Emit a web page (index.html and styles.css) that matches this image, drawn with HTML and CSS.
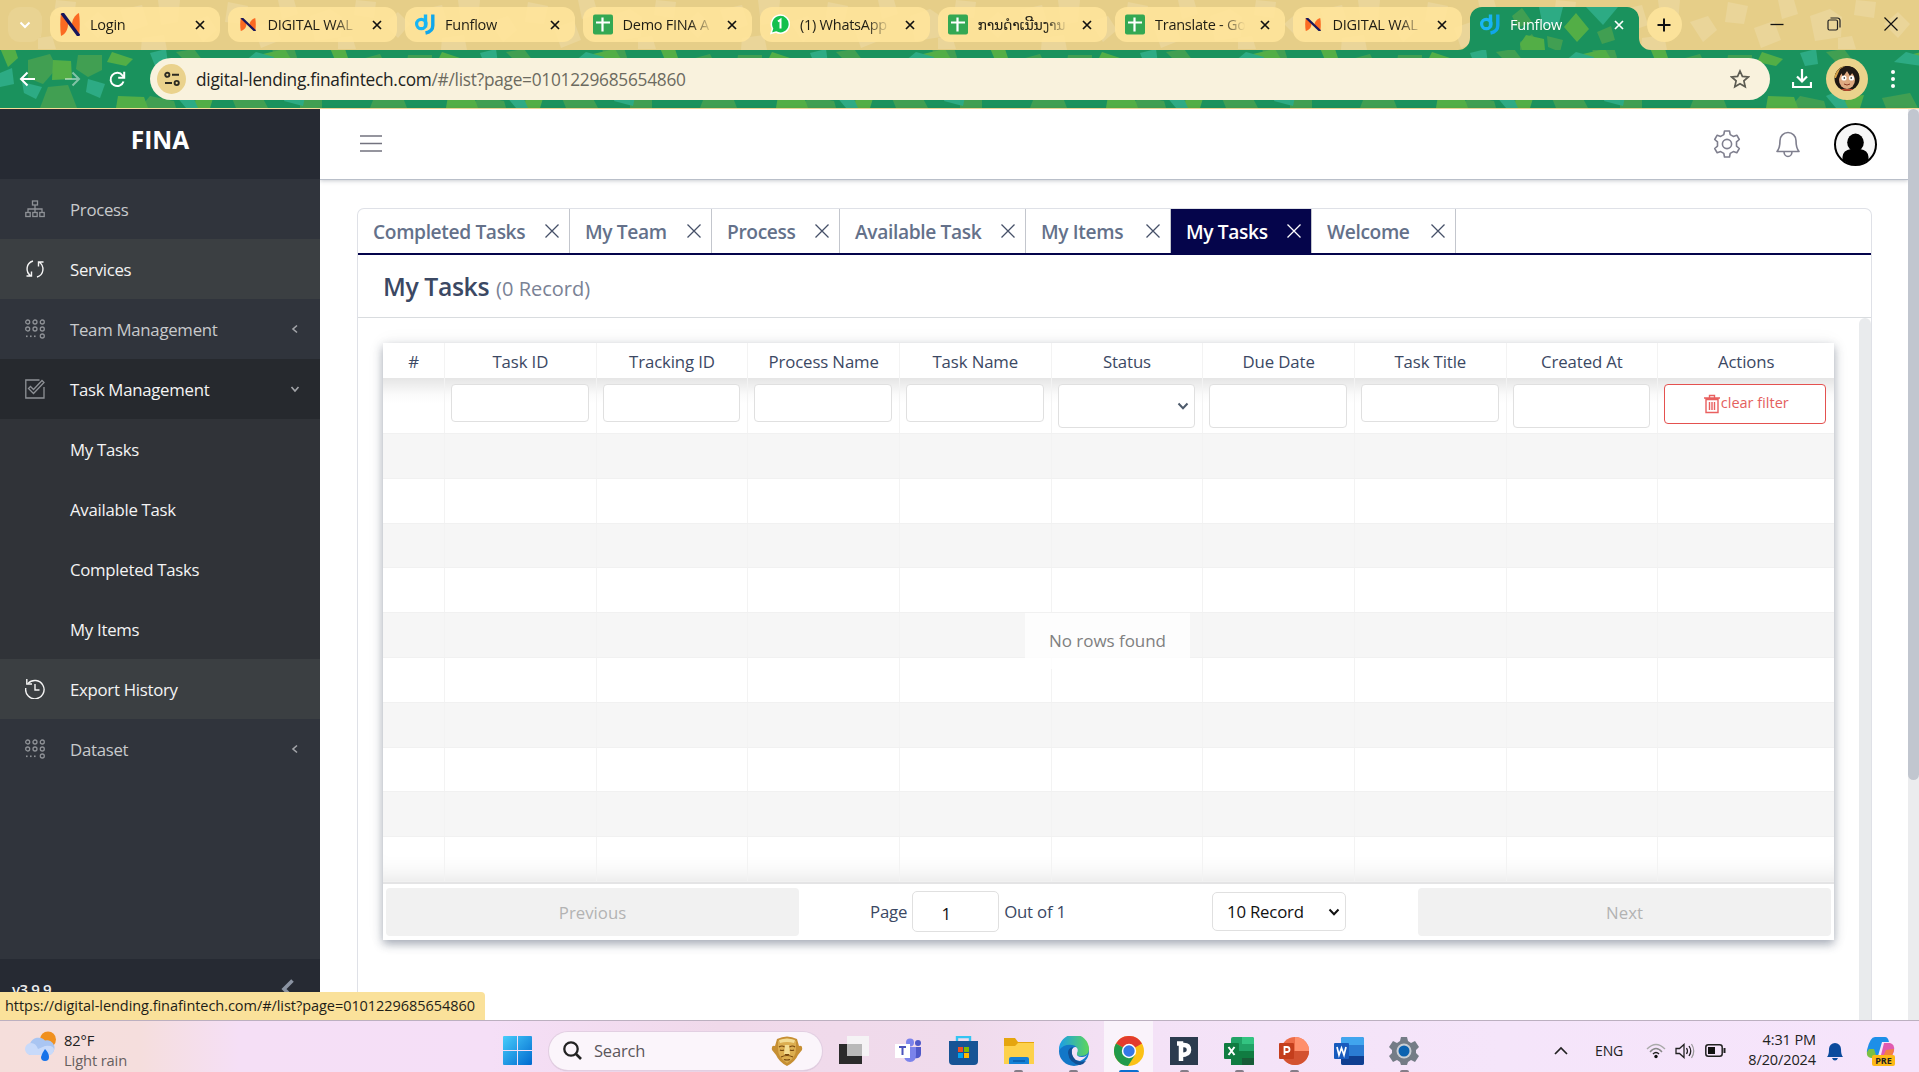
FILE: index.html
```html
<!DOCTYPE html>
<html lang="en">
<head>
<meta charset="utf-8">
<title>Funflow</title>
<link rel="stylesheet" href="styles.css">
</head>
<body>
<svg class="defs" width="0" height="0" aria-hidden="true">
  <defs>
    <symbol id="nlogo" viewBox="0 0 20 24" preserveAspectRatio="none"><path d="M1 0C0 7 0 17 1 24C6 22 8 16 8 12C8 8 5 3 1 0Z" fill="#fb6a22"/><path d="M19 0C20 7 20 17 19 24C15 21 12 16 12 12C12 7 15 2 19 0Z" fill="#fb6a22"/><path d="M2 0L19 24" stroke="#17165c" stroke-width="3.4"/></symbol>
    <symbol id="dj" viewBox="0 0 20 20"><path d="M10.5 0v13" stroke="#19b5f3" stroke-width="3.4" fill="none"/><circle cx="6.3" cy="9.5" r="4.7" stroke="#19b5f3" stroke-width="3.2" fill="none"/><path d="M17.8 0v11c0 4-2.5 6.500-7.300 7.500" stroke="#10a6ea" stroke-width="3.4" fill="none"/></symbol>
    <symbol id="sheet" viewBox="0 0 20 20"><rect width="20" height="20" rx="2" fill="#34a853"/><path d="M9.500 3v14M3 8h14" stroke="#fff" stroke-width="2.2"/></symbol>
    <symbol id="x" viewBox="0 0 10 10"><path d="M1 1l8 8M9 1l-8 8" stroke="currentColor" stroke-width="1.7"/></symbol>
    <symbol id="thinx" viewBox="0 0 14 14"><path d="M.5 .5l13 13M13.500 .5l-13 13" stroke="currentColor" stroke-width="1.3"/></symbol>
    <symbol id="dots" viewBox="0 0 20 20"><g fill="none" stroke="currentColor" stroke-width="1.300"><circle cx="2.700" cy="3" r="2"/><circle cx="10" cy="3" r="2"/><circle cx="17.300" cy="3" r="2"/><circle cx="2.700" cy="10" r="2"/><circle cx="10" cy="10" r="2"/><circle cx="17.300" cy="10" r="2"/><circle cx="17.300" cy="17" r="2"/></g><g fill="currentColor"><rect x="1" y="16.500" width="1.600" height="1.600"/><rect x="5" y="16.500" width="1.600" height="1.600"/><rect x="9" y="16.500" width="1.600" height="1.600"/></g></symbol>
    <pattern id="confetti" width="330" height="108" patternUnits="userSpaceOnUse">
      <g fill="#419f52"><path d="M28 60l22-6 7 14-14 16-15-6z"/><path d="M78 55l24 0 0 15-14 7-12-8z"/><path d="M48 87l20-2 9 23H40z"/><path d="M125 0l20 4 4 22-18 5-14-17z"/><path d="M190 8l22-4 5 20-18 6z"/><path d="M176 52l18-3 9 12-12 6z"/><path d="M150 96l24 5 2 7h-36z"/><path d="M232 98l28-5 8 15h-32z"/><path d="M272 45l20-4 6 20-24 4z"/><path d="M300 84l22 2 0 22h-22z"/><path d="M4 8l18 4-2 18-20-4z"/></g>
      <g fill="#53ae46"><path d="M53 60l18 1 1 18-20 1z"/><path d="M0 48l14-2 4 12-10 9z"/><path d="M112 52l21 7-7 7-19-4z"/><path d="M118 96l26 1 4 11h-32z"/><path d="M229 20l18-2 9 16-16 14-13-10z"/><path d="M263 54l22-5 7 12-20 4z"/><path d="M310 18l12-8 8 18-17 9z"/><path d="M196 97l18-2-4 13h-16z"/></g>
      <g fill="#2dab84"><path d="M0 73l12-5 2 16-14 3z"/><path d="M22 82l20 5-6 12-12-6z"/><path d="M88 79l17 5-5 14-14-6z"/><path d="M82 4l15 0-2 17-17-2z"/><path d="M150 53l16-4 2 15-13 2z"/><path d="M176 96l14-6 8 18h-12z"/><path d="M244 62l12-10 18 5-2 9z"/><path d="M270 2l17 8-4 17-20-4z"/><path d="M288 88l18 4-3 14-19-5z"/></g>
    </pattern>
    <pattern id="paper" width="300" height="50" patternUnits="userSpaceOnUse">
      <g fill="#fff" opacity=".14"><path d="M10 16l20-7 12 8-1 20-26 4z"/><path d="M56 0l20 2-2 16-20-3z"/><path d="M84 24l14-12 12 12-12 14z"/><path d="M120 10l22-5 6 20-20 7z"/><path d="M158 0l22 0-2 22-17 3z"/><path d="M190 22l18-6 9 14-14 12z"/><path d="M228 2l20 4-4 18-19-2z"/><path d="M254 28l20-7 7 19-20 8z"/><path d="M278 0h16l4 14-16 5z"/><path d="M38 38l14-2 4 13h-18z"/><path d="M142 38l22-3 3 15h-26z"/></g>
    </pattern>
    <clipPath id="strip"><path d="M0 0H1919V50H1651a12 12 0 0 1-12-12V19a12 12 0 0 0-12-12H1482a12 12 0 0 0-12 12V38a12 12 0 0 1-12 12H0z"/></clipPath>
    <clipPath id="activetab"><path d="M1470 50V19a12 12 0 0 1 12-12H1627a12 12 0 0 1 12 12V50z"/></clipPath>
  </defs>
</svg>

<header class="browser">
  <svg class="theme" width="1919" height="109"><rect width="1919" height="109" fill="#1a925d"/><rect width="1919" height="109" fill="url(#confetti)"/>
    <g clip-path="url(#activetab)"><rect x="1470" width="170" height="50" fill="#1a925d"/><path d="M1512 16l10-8 10 14-14 6zM1520 42l12-8 10 16h-22zM1547 36l16 4-3 12-12-5z" fill="#419f52"/><path d="M1539 7h24l-4 16-16 4z" fill="#2dab84"/><path d="M1564 27l12-14 13 16-12 13zM1520 44l6-9 18 4 1 11h-23z" fill="#53ae46"/><path d="M1597 32l14-6 4 14-13 4z" fill="#419f52"/><path d="M1586 7h32l-15 18z" fill="#2dab84"/></g>
    <g clip-path="url(#strip)"><rect width="1919" height="50" fill="#e6ce88"/><rect width="1919" height="50" fill="url(#paper)"/></g></svg>
  <div class="tabstrip">
    <div class="tabsearch"><svg width="12" height="8" viewBox="0 0 12 8"><path d="M1.500 1.500L6 6l4.500-4.500" fill="none" stroke="#fff" stroke-width="2"/></svg></div>
    <div class="tab"><svg class="fav"><use href="#nlogo"/></svg><span>Login</span><svg class="close"><use href="#x"/></svg></div>
    <div class="tab small"><svg class="fav"><use href="#nlogo"/></svg><span>DIGITAL WAL</span><svg class="close"><use href="#x"/></svg></div>
    <div class="tab"><svg class="fav"><use href="#dj"/></svg><span>Funflow</span><svg class="close"><use href="#x"/></svg></div>
    <div class="tab"><svg class="fav"><use href="#sheet"/></svg><span>Demo FINA A</span><svg class="close"><use href="#x"/></svg></div>
    <div class="tab"><svg class="fav" viewBox="0 0 20 20"><path d="M1 19l1.500-5A9 9 0 1 1 6 17.500z" fill="#14c04d" stroke="#fff" stroke-width="1.500"/><path d="M8 7l2.500-1.800V14" stroke="#fff" stroke-width="2" fill="none"/></svg><span>(1) WhatsApp</span><svg class="close"><use href="#x"/></svg></div>
    <div class="tab"><svg class="fav"><use href="#sheet"/></svg><span class="lao">ການດຳເນີນງານ</span><svg class="close"><use href="#x"/></svg></div>
    <div class="tab"><svg class="fav"><use href="#sheet"/></svg><span>Translate - Go</span><svg class="close"><use href="#x"/></svg></div>
    <div class="tab small"><svg class="fav"><use href="#nlogo"/></svg><span>DIGITAL WAL</span><svg class="close"><use href="#x"/></svg></div>
    <div class="tab active"><svg class="fav"><use href="#dj"/></svg><span>Funflow</span><svg class="close"><use href="#x"/></svg></div>
    <div class="newtab"><svg width="14" height="14" viewBox="0 0 14 14"><path d="M7 .5v13M.5 7h13" stroke="#111" stroke-width="2"/></svg></div>
    <div class="winctl">
      <svg width="14" height="14" viewBox="0 0 14 14"><path d="M.5 7.500h13" stroke="#111" stroke-width="1.300"/></svg>
      <svg width="14" height="14" viewBox="0 0 14 14"><rect x="1" y="3" width="9.500" height="10" rx="1.500" fill="none" stroke="#222" stroke-width="1.200"/><path d="M3.500 1h7a2.500 2.500 0 0 1 2.500 2.500v7" fill="none" stroke="#222" stroke-width="1.200"/></svg>
      <svg width="14" height="14" viewBox="0 0 14 14"><path d="M.5 .5l13 13M13.500 .5l-13 13" stroke="#111" stroke-width="1.200"/></svg>
    </div>
  </div>
  <div class="toolbar">
    <svg class="back" width="18" height="16" viewBox="0 0 18 16"><path d="M16 8H2M8.500 1.500L2 8l6.500 6.500" fill="none" stroke="#fff" stroke-width="2"/></svg>
    <svg class="fwd" width="18" height="16" viewBox="0 0 18 16"><path d="M1 8h14M8.500 1.500L15 8l-6.500 6.500" fill="none" stroke="#fff" stroke-width="2" opacity=".45"/></svg>
    <svg class="reload" width="17" height="17" viewBox="0 0 17 17"><path d="M14.500 10.500A6.600 6.600 0 1 1 13.500 4.500L15 6" fill="none" stroke="#fff" stroke-width="2"/><path d="M15.200 .8v6h-6" fill="none" stroke="#fff" stroke-width="2"/></svg>
    <div class="omnibox">
      <span class="site"><svg width="16" height="16" viewBox="0 0 16 16"><g fill="none" stroke="#2c2b22" stroke-width="1.900"><circle cx="3.300" cy="3.800" r="2.100"/><path d="M8 3.800h7M1 12h7"/><circle cx="12.700" cy="12" r="2.100"/></g></svg></span>
      <span class="url">digital-lending.finafintech.com<span>/#/list?page=0101229685654860</span></span>
      <svg class="star" width="20" height="20" viewBox="0 0 20 20"><path d="M10 2l2.400 5.400 5.900.6-4.400 3.900 1.300 5.800L10 14.700l-5.200 3 1.300-5.800L1.700 8l5.900-.6z" fill="none" stroke="#5d5c52" stroke-width="1.700"/></svg>
    </div>
    <svg class="download" width="20" height="20" viewBox="0 0 20 20"><path d="M10 0v12M5 7.500l5 5 5-5M1 13v5h18v-5" fill="none" stroke="#fff" stroke-width="2.200"/></svg>
    <svg class="profile" width="42" height="42" viewBox="0 0 42 42"><circle cx="21" cy="21" r="21" fill="#ebd38c"/><clipPath id="pc"><circle cx="21" cy="20.500" r="12.500"/></clipPath><g clip-path="url(#pc)"><rect width="42" height="42" fill="#1d1712"/><ellipse cx="21" cy="22" rx="8" ry="9" fill="#dfa981"/><path d="M8 12Q20 4 34 12L30 24 27 14 24 18 21 13 17 19 15 14 12 24z" fill="#221a15"/><path d="M6 20Q8 7 21 7L14 11 10 20z" fill="#d7a449"/><circle cx="18" cy="20" r="2.600" fill="#fff"/><circle cx="25.500" cy="20" r="2.600" fill="#fff"/><circle cx="18.300" cy="20" r=".8"/><circle cx="25.200" cy="20" r=".8"/><path d="M18 26q3 2 6 0" stroke="#8b3c28" fill="none"/><path d="M14 31h14v4H14z" fill="#b5462d"/></g></svg>
    <svg class="menu" width="6" height="20" viewBox="0 0 6 20"><g fill="#fff"><circle cx="3" cy="3" r="2"/><circle cx="3" cy="10" r="2"/><circle cx="3" cy="17" r="2"/></g></svg>
  </div>
</header>

<div class="page">
  <aside class="sidebar">
    <div class="brand">FINA</div>
    <nav>
      <a class="item"><svg viewBox="0 0 20 20"><g fill="none" stroke="currentColor" stroke-width="1.300"><rect x="7.500" y="2" width="5" height="4"/><rect x=".8" y="13.500" width="4.400" height="4"/><rect x="7.800" y="13.500" width="4.400" height="4"/><rect x="14.800" y="13.500" width="4.400" height="4"/><path d="M10 6v7.500M3 13.500V10h14v3.500"/></g></svg>Process</a>
      <a class="item hl"><svg viewBox="0 0 20 20"><g fill="none" stroke="currentColor" stroke-width="1.400"><path d="M8 2C1 4 0 13 6 17M1.500 17H6.500V12.500M12 18c7-2 8-11 2-15M18.500 3h-5V7.500"/></g></svg>Services</a>
      <a class="item"><svg viewBox="0 0 20 20"><use href="#dots"/></svg>Team Management<svg class="arr" viewBox="0 0 8 10"><path d="M6 1.500L2 5l4 3.500" fill="none" stroke="currentColor" stroke-width="1.600"/></svg></a>
      <a class="item open"><svg viewBox="0 0 20 20"><g fill="none" stroke="currentColor" stroke-width="1.300"><path d="M14.500 1H.8v18H19V8"/><path d="M3.500 9.500l2-2 3 3 8.500-9 2 2-10.500 11z"/></g></svg>Task Management<svg class="arr" viewBox="0 0 10 8"><path d="M1.500 2L5 6l3.500-4" fill="none" stroke="currentColor" stroke-width="1.600"/></svg></a>
      <a class="item sub">My Tasks</a>
      <a class="item sub">Available Task</a>
      <a class="item sub">Completed Tasks</a>
      <a class="item sub">My Items</a>
      <a class="item hl"><svg viewBox="0 0 20 20"><g fill="none" stroke="currentColor" stroke-width="1.400"><path d="M3 4.500A9.200 9.200 0 1 1 .8 9"/><path d="M1.800 0v5H7M10 5v6h4.500"/></g></svg>Export History</a>
      <a class="item"><svg viewBox="0 0 20 20"><use href="#dots"/></svg>Dataset<svg class="arr" viewBox="0 0 8 10"><path d="M6 1.500L2 5l4 3.500" fill="none" stroke="currentColor" stroke-width="1.600"/></svg></a>
    </nav>
    <div class="version"><span>v3.9.9</span><svg width="14" height="20" viewBox="0 0 14 20"><path d="M11.500 1.500L3 10l8.500 8.500" fill="none" stroke="#8a93a2" stroke-width="3.600"/></svg></div>
  </aside>
  <div class="main">
    <div class="topbar">
      <svg class="burger" width="22" height="17" viewBox="0 0 22 17"><path d="M0 1h22M0 8.500h22M0 16h22" stroke="#73737f" stroke-width="1.500"/></svg>
      <svg class="gear" width="28" height="28" viewBox="0 0 28 28"><g fill="none" stroke="#7f7f8e" stroke-width="1.600" stroke-linejoin="round"><circle cx="14" cy="14" r="4.600"/><path d="M11.500 1h5l.7 3.600 3.100 1.800 3.500-1.200 2.500 4.300-2.800 2.400v4.200l2.800 2.400-2.500 4.300-3.500-1.200-3.100 1.800-.7 3.600h-5l-.7-3.600-3.100-1.800-3.500 1.200-2.500-4.300 2.800-2.400v-4.200L1.700 9.500l2.500-4.300 3.500 1.200 3.100-1.800z"/></g></svg>
      <svg class="bell" width="24" height="27" viewBox="0 0 24 27"><path d="M1 20.500C4 17 4 13 4 9.500a8 8 0 0 1 16 0c0 3.500 0 7.500 3 11zM8 20.500a4 5 0 0 0 8 0" fill="none" stroke="#7f7f8e" stroke-width="1.600" stroke-linejoin="round"/></svg>
      <svg class="avatar" width="43" height="43" viewBox="0 0 43 43"><clipPath id="av"><circle cx="21.500" cy="21.500" r="20"/></clipPath><circle cx="21.500" cy="21.500" r="20.500" fill="#f6f6f6" stroke="#000" stroke-width="2"/><g clip-path="url(#av)"><ellipse cx="21.500" cy="19.500" rx="8.300" ry="9"/><path d="M8.500 42V34Q9 27 17 26h9q8 1 8.500 8v8z"/></g></svg>
    </div>
    <div class="content">
      <section class="card">
        <div class="pagetabs">
          <div class="ptab w1"><span>Completed Tasks</span><svg><use href="#thinx"/></svg></div>
          <div class="ptab w2"><span>My Team</span><svg><use href="#thinx"/></svg></div>
          <div class="ptab w3"><span>Process</span><svg><use href="#thinx"/></svg></div>
          <div class="ptab w4"><span>Available Task</span><svg><use href="#thinx"/></svg></div>
          <div class="ptab w5"><span>My Items</span><svg><use href="#thinx"/></svg></div>
          <div class="ptab w6 on"><span>My Tasks</span><svg><use href="#thinx"/></svg></div>
          <div class="ptab w7"><span>Welcome</span><svg><use href="#thinx"/></svg></div>
        </div>
        <div class="title"><b>My Tasks</b><span>(0 Record)</span></div>
        <div class="scrollarea">
          <div class="grid">
            <div class="row head"><div>#</div><div>Task ID</div><div>Tracking ID</div><div>Process Name</div><div>Task Name</div><div>Status</div><div>Due Date</div><div>Task Title</div><div>Created At</div><div>Actions</div></div>
            <div class="body">
              <div class="row filter"><div></div><div><i class="in"></i></div><div><i class="in"></i></div><div><i class="in"></i></div><div><i class="in"></i></div><div><i class="in tall"><svg width="12" height="8" viewBox="0 0 12 8"><path d="M1.500 1.500L6 6.200l4.500-4.700" fill="none" stroke="#4d5a6b" stroke-width="2"/></svg></i></div><div><i class="in tall"></i></div><div><i class="in"></i></div><div><i class="in tall"></i></div>
                <div><button class="clear"><svg width="16" height="20" viewBox="0 0 16 20"><g fill="none" stroke="#e9605f" stroke-width="1.400"><path d="M0 4h16M5.500 3.500V1.500h5v2M2 5.500v13h12v-13zM5.500 8v8M8 8v8M10.500 8v8"/></g></svg>clear filter</button></div></div>
              <div class="row"><div></div><div></div><div></div><div></div><div></div><div></div><div></div><div></div><div></div><div></div></div>
              <div class="row"><div></div><div></div><div></div><div></div><div></div><div></div><div></div><div></div><div></div><div></div></div>
              <div class="row"><div></div><div></div><div></div><div></div><div></div><div></div><div></div><div></div><div></div><div></div></div>
              <div class="row"><div></div><div></div><div></div><div></div><div></div><div></div><div></div><div></div><div></div><div></div></div>
              <div class="row"><div></div><div></div><div></div><div></div><div></div><div></div><div></div><div></div><div></div><div></div></div>
              <div class="row"><div></div><div></div><div></div><div></div><div></div><div></div><div></div><div></div><div></div><div></div></div>
              <div class="row"><div></div><div></div><div></div><div></div><div></div><div></div><div></div><div></div><div></div><div></div></div>
              <div class="row"><div></div><div></div><div></div><div></div><div></div><div></div><div></div><div></div><div></div><div></div></div>
              <div class="row"><div></div><div></div><div></div><div></div><div></div><div></div><div></div><div></div><div></div><div></div></div>
              <div class="row"><div></div><div></div><div></div><div></div><div></div><div></div><div></div><div></div><div></div><div></div></div>
              <div class="empty">No rows found</div>
            </div>
            <div class="pager">
              <button class="nav">Previous</button>
              <div class="pageno">Page<span class="num">1</span>Out of 1</div>
              <div class="size">10 Record<svg width="12" height="8" viewBox="0 0 12 8"><path d="M1.500 1.500L6 6.200l4.500-4.700" fill="none" stroke="#111" stroke-width="2"/></svg></div>
              <button class="nav">Next</button>
            </div>
          </div>
          <div class="innerbar"></div>
        </div>
      </section>
    </div>
  </div>
  <div class="pagebar"><div></div></div>
  <div class="status">https://digital-lending.finafintech.com/#/list?page=0101229685654860</div>
</div>

<footer class="taskbar">
  <svg class="weather" width="31" height="32" viewBox="0 0 31 32"><circle cx="23" cy="8.500" r="8" fill="#f0901f"/><path d="M6 24a6 6 0 0 1-1-11.500A9 9 0 0 1 20 9.500a7 7 0 1 1 4 14.500z" fill="#a9c5f2"/><path d="M6 24a6 6 0 0 1 0-12q5 0 7 6l7-3q9-1 9 4-1 5-5 5z" fill="#c8dafa"/><path d="M20 18q4 4 4 8a4 4 0 0 1-8 0q1-4 4-8z" fill="#1673ea"/></svg>
  <div class="temp">82°F<span>Light rain</span></div>
  <svg class="start" width="29" height="29" viewBox="0 0 29 29"><defs><linearGradient id="wg" x2="1" y2="1"><stop stop-color="#48cdfb"/><stop offset="1" stop-color="#0069cf"/></linearGradient></defs><path d="M1 0h13v14H0V1q0-1 1-1zM15 0h13q1 0 1 1v13H15zM0 15h14v14H1q-1 0-1-1zM15 15h14v13q0 1-1 1H15z" fill="url(#wg)"/></svg>
  <div class="search"><svg width="19" height="19" viewBox="0 0 19 19"><circle cx="8" cy="8" r="6.700" fill="none" stroke="#222" stroke-width="2.300"/><path d="M13 13l5 5" stroke="#222" stroke-width="2.600"/></svg><span>Search</span>
    <svg width="32" height="30" viewBox="0 0 32 30"><path d="M6 3Q16-2 26 3l2 7q4-1 3 4l-4 5q-3 7-11 11Q8 26 5 19l-4-5q-1-5 3-4z" fill="#c68f33"/><path d="M7 5q9-5 18 0v8q0 9-9 14-9-5-9-14z" fill="#dcae50"/><path d="M14 9h4l1 9h-6z" fill="#f3dc93"/><path d="M8 4q8-3 16 0l-1 3q-7-2-14 0z" fill="#f3dc93"/><path d="M8 11q3-2 5.500 0M18.500 11q3-2 5.500 0M9 14q2 1 4 0M19 14q2 1 4 0M10 21q6-3 12 0M13 23.500q3 1 6 0M14 18.500h4" fill="none" stroke="#76470f" stroke-width="1.200"/></svg></div>
  <div class="apps">
    <div><svg width="30" height="30" viewBox="0 0 30 30"><rect y="8" width="23" height="20" fill="#2b2b2b"/><rect x="8" width="22" height="20" fill="#f5f5f5" opacity=".92"/><rect x="8" y="8" width="15" height="12" fill="#b9b9b9"/></svg></div>
    <div><svg width="27" height="26" viewBox="0 0 27 26"><circle cx="15" cy="4.500" r="4" fill="#7b83eb"/><circle cx="23" cy="5" r="3" fill="#5059c9"/><path d="M19 9h7v7q0 5-7 4z" fill="#5059c9"/><path d="M9 9h12v8q0 7-6 7t-6-7z" fill="#7b83eb"/><rect y="6" width="15" height="14" fill="#fff"/><path d="M4 9h7M7.500 9v8" stroke="#4b53bc" stroke-width="2"/></svg></div>
    <div><svg width="29" height="29" viewBox="0 0 29 29"><path d="M8 6V1h13v5" fill="none" stroke="#35c4f2" stroke-width="2.400"/><path d="M0 5h29v20q0 4-4 4H4q-4 0-4-4z" fill="#175495"/><path d="M9 11h5v5H9z" fill="#f25022"/><path d="M15 11h5v5h-5z" fill="#7fba00"/><path d="M9 17h5v5H9z" fill="#00a4ef"/><path d="M15 17h5v5h-5z" fill="#ffb900"/></svg></div>
    <div class="run"><svg width="30" height="28" viewBox="0 0 30 28"><path d="M0 1h11l3 4h16v22H0z" fill="#e5a50e"/><path d="M0 9l11 0 3-3h16v21H0z" fill="#fdd14b"/><path d="M5 27v-5q0-2 2-2h16q2 0 2 2v5z" fill="#1580d6"/><path d="M9 24h12" stroke="#0a5ba8" stroke-width="1.500"/></svg></div>
    <div class="run"><svg width="30" height="30" viewBox="0 0 30 30"><defs><linearGradient id="eg" x2="1"><stop stop-color="#1a9de8"/><stop offset="1" stop-color="#5ed65a"/></linearGradient></defs><circle cx="15" cy="15" r="15" fill="#1277c8"/><path d="M0 14A15 15 0 0 1 30 13q0 7-8 7-5 0-4-3 2-7-5-8Q5 8 0 14z" fill="url(#eg)"/><path d="M18 17q-1 4 5 4 4 0 6-3-3 5-8 7-10-1-9-9 1-5 5-5 3 2 1 6z" fill="#f3e2f7"/><path d="M9 17q1 10 12 12 4-1 6-4-11 3-14-7-1-4 1-7-5 1-5 6z" fill="#124f93"/></svg></div>
    <div class="run cur"><svg width="30" height="30" viewBox="0 0 30 30"><circle cx="15" cy="15" r="15" fill="#fbc116"/><path d="M15 15L2 7.500A15 15 0 0 1 28 7.500z" fill="#e33b2e"/><path d="M15 15l-13-7.500A15 15 0 0 0 14 30l7-11z" fill="#229a4b"/><circle cx="15" cy="15" r="7.200" fill="#fff"/><circle cx="15" cy="15" r="5.700" fill="#3478e6"/></svg></div>
    <div class="run"><svg width="28" height="28" viewBox="0 0 28 28"><rect width="28" height="28" fill="#2b3b4e"/><path d="M7 6.500h4V24M11 8h3q5 0 5 5t-8 5" fill="none" stroke="#fff" stroke-width="4.500"/></svg></div>
    <div class="run"><svg width="30" height="28" viewBox="0 0 30 28"><rect x="7" width="23" height="28" rx="2" fill="#21a366"/><path d="M7 14h23v14H7z" fill="#107c41"/><path d="M18 0h10q2 0 2 2v5H18z" fill="#33c481"/><path d="M18 21h12v5q0 2-2 2H18z" fill="#185c37"/><rect y="6" width="15" height="16" rx="1" fill="#107c41"/><path d="M4.500 10l6 8M10.500 10l-6 8" stroke="#fff" stroke-width="2"/></svg></div>
    <div class="run"><svg width="30" height="28" viewBox="0 0 30 28"><circle cx="16" cy="14" r="14" fill="#ed6c47"/><path d="M16 0a14 14 0 0 1 14 14H16z" fill="#ff8f6b"/><path d="M2 14h28a14 14 0 0 1-28 0z" fill="#d35230"/><rect y="6" width="15" height="16" rx="1" fill="#c43e1c"/><path d="M5.500 18v-8h2.500q2.500 0 2.500 2.500T8 15H5.500" fill="none" stroke="#fff" stroke-width="1.800"/></svg></div>
    <div><svg width="30" height="28" viewBox="0 0 30 28"><rect x="7" width="23" height="28" rx="2" fill="#2b7cd3"/><path d="M7 2q0-2 2-2h19q2 0 2 2v6H7z" fill="#41a5ee"/><path d="M7 19h23v7q0 2-2 2H9q-2 0-2-2z" fill="#103f91"/><rect y="6" width="15" height="16" rx="1" fill="#185abd"/><path d="M3 10l2 8 2.500-7L10 18l2-8" fill="none" stroke="#fff" stroke-width="1.700"/></svg></div>
    <div class="run"><svg width="30" height="28" viewBox="0 0 30 28"><path d="M12 0h6l1 4 3 2 4-2 4 6-3 3v3l3 3-4 6-4-2-3 2-1 3h-6l-1-3-3-2-4 2-4-6 3-3v-3L0 10l4-6 4 2 3-2z" fill="#747c86"/><circle cx="15" cy="14" r="7.500" fill="#c9ced4"/><circle cx="15" cy="14" r="5.500" fill="#0b62b0"/></svg></div>
  </div>
  <div class="tray">
    <svg class="up" width="14" height="9" viewBox="0 0 14 9"><path d="M1 8l6-6 6 6" fill="none" stroke="#222" stroke-width="1.700"/></svg>
    <span class="lang">ENG</span>
    <svg class="wifi" width="20" height="16" viewBox="0 0 20 16"><g fill="none" stroke="#aaa" stroke-width="1.400"><path d="M1 6Q10-3 19 6"/><path d="M4 9Q10 2 16 9" stroke="#888"/><path d="M7 11Q10 8 13 11" stroke="#222"/></g><circle cx="10" cy="13.500" r="1.700" fill="#111"/></svg>
    <svg class="vol" width="20" height="16" viewBox="0 0 20 16"><path d="M1 5.500h3.500L9 1.500v13l-4.500-4H1zM11.500 5q2 3 0 6M14 3q3.500 5 0 10" fill="none" stroke="#222" stroke-width="1.300"/><path d="M16.500 1q4.500 7 0 14" fill="none" stroke="#999" stroke-width="1.200"/></svg>
    <svg class="bat" width="21" height="13" viewBox="0 0 21 13"><rect x=".8" y=".8" width="16.400" height="11.400" rx="2.500" fill="none" stroke="#222" stroke-width="1.500"/><rect x="3" y="3" width="7" height="7" fill="#111"/><path d="M19.500 4v5" stroke="#222" stroke-width="2"/></svg>
    <div class="clock">4:31 PM<span>8/20/2024</span></div>
    <svg class="nbell" width="18" height="20" viewBox="0 0 18 20"><path d="M1 16q2-2 2-8a6 6 0 0 1 12 0q0 6 2 8zM6 17h6q-1 2.500-3 2.500T6 17z" fill="#0b4a9c"/></svg>
    <svg class="copilot" width="30" height="30" viewBox="0 0 30 30"><path d="M9 1h10q3 0 4 5l-7 0-4 14H4q-4-1-3-6Q4 1 9 1z" fill="#1d8fe8"/><path d="M3 13l5 0 3 9H5q-5-1-4-6z" fill="#7bc043"/><path d="M18 7h6q5 1 4 8-2 6-5 8h-9z" fill="#e05ab0"/><path d="M20 14l8-1q-1 7-5 10h-7z" fill="#f4813f"/><rect x="6" y="19" width="23" height="11" rx="2" fill="#fdb916"/><text x="17.500" y="28" text-anchor="middle" class="pre">PRE</text></svg>
  </div>
</footer>
</body>
</html>
```

FILE: styles.css
```css
* { box-sizing: border-box; }
body { margin: 0; width: 1919px; height: 1072px; overflow: hidden; background: #fff; font-family: "Open Sans", "Noto Sans", sans-serif; color: #3b4863; display: flex; flex-direction: column; }
.defs { position: absolute; }
svg { flex: none; display: block; }
button { font: inherit; }

.browser { height: 109px; position: relative; border-bottom: 1px solid #f7dd97; flex: none; }
.theme { position: absolute; left: 0; top: 0; height: 108px; }
.tabstrip { position: relative; height: 50px; display: flex; align-items: flex-start; padding: 7px 0 0 8px; }
.tabsearch { width: 34px; height: 35px; border-radius: 12px; background: #e9d392; display: flex; align-items: center; justify-content: center; margin-right: 8px; }
.tab { width: 169.5px; height: 35px; margin-right: 8px; border-radius: 12px; background: rgba(255, 229, 155, .88); display: flex; align-items: center; padding-left: 10px; font-size: 14.5px; letter-spacing: -.25px; color: #1f1d14; flex: none; }
.tab .fav { width: 20px; height: 23px; margin-right: 10px; }
.tab.small .fav { width: 16px; height: 13px; margin: 0 12px 0 2px; }
.tab span { width: 92px; height: 24px; line-height: 24px; overflow: hidden; white-space: nowrap; -webkit-mask-image: linear-gradient(90deg, #000 72%, transparent 98%); mask-image: linear-gradient(90deg, #000 72%, transparent 98%); }
.tab .lao { font-family: "DejaVu Sans", sans-serif; font-size: 14px; }
.tab .close { width: 10px; height: 10px; margin-left: 12.500px; color: #111; }
.tab.active { background: none; color: #fff; margin-right: 7px; }
.tab.active .close { color: #fff; margin-left: 11.5px; }
.newtab { width: 35px; height: 35px; border-radius: 50%; background: #fbe29a; display: flex; align-items: center; justify-content: center; }
.winctl { margin-left: auto; display: flex; gap: 43px; padding: 10px 21px 0 0; }
.toolbar { position: relative; height: 58px; display: flex; align-items: center; }
.back { margin-left: 19px; }
.fwd { margin-left: 27px; }
.reload { margin-left: 27px; }
.omnibox { margin-left: 24px; width: 1620px; height: 42px; border-radius: 21px; background: #f9f2dd; display: flex; align-items: center; padding-left: 7px; }
.site { width: 29px; height: 30px; border-radius: 50%; background: #ead28c; display: flex; align-items: center; justify-content: center; }
.url { margin-left: 10px; font-size: 17.3px; letter-spacing: -.26px; color: #22221c; }
.url span { color: #6c6a60; }
.star { margin: 0 20px 0 auto; }
.download { margin-left: 22px; }
.profile { margin-left: 14px; }
.menu { margin-left: 22px; }

.page { height: 911px; display: flex; position: relative; flex: none; }
.sidebar { width: 320px; background: #30343c; display: flex; flex-direction: column; position: relative; flex: none; }
.brand { height: 70px; background: #262a33; color: #fff; font-size: 24.5px; font-weight: 700; text-align: center; line-height: 62px; letter-spacing: 0; flex: none; }
.item { height: 60px; display: flex; align-items: center; padding-left: 25px; font-size: 16.8px; letter-spacing: -.28px; color: #c8cacc; }
.item > svg:first-child { width: 20px; height: 20px; margin-right: 25px; color: #8e9196; }
.item.hl { background: #3b3f42; color: #f4f4f4; }
.item.hl > svg:first-child { color: #f4f4f4; }
.item.open { background: #26292e; color: #f4f4f4; }
.item.sub { padding-left: 70px; background: #303338; color: #f4f4f4; }
.item .arr { width: 10px; height: 10px; margin: 0 20px 0 auto; color: #a3a5a9; }
.version { margin-top: auto; height: 61px; background: #262a33; display: flex; justify-content: space-between; padding: 20px 25px 0 12px; color: #eee; font-size: 15px; font-weight: 600; letter-spacing: -.5px; }
.main { flex: 1; display: flex; flex-direction: column; min-width: 0; }
.topbar { height: 71px; border-bottom: 1px solid #b9bfc9; box-shadow: 0 1px 4px rgba(40, 50, 70, .25); display: flex; align-items: center; padding-left: 40px; flex: none; }
.burger { margin-top: -1px; }
.gear { margin-left: 1331px; }
.bell { margin-left: 35px; }
.avatar { margin-left: 34px; }
.content { flex: 1; padding: 28px 36px 0 37px; min-height: 0; }
.card { height: 812px; border: 1px solid #dfe1e7; border-bottom: 0; border-radius: 7px 7px 0 0; display: flex; flex-direction: column; overflow: hidden; }
.pagetabs { height: 46px; border-bottom: 2px solid #04044b; display: flex; flex: none; }
.ptab { border-right: 1px solid #c3c6cd; display: flex; align-items: center; justify-content: space-between; padding: 1px 10px 0 15px; font-size: 19.2px; font-weight: 600; color: #64718a; letter-spacing: -.37px; white-space: nowrap; }
.ptab svg { width: 14px; height: 14px; color: #465068; margin-top: -1px; }
.w1 { width: 212px; } .w2 { width: 142px; } .w3 { width: 128px; } .w4 { width: 186px; } .w5 { width: 145px; } .w6 { width: 141px; } .w7 { width: 144px; }
.ptab.on { background: #05054b; color: #fff; }
.ptab.on svg { color: #fff; }
.title { height: 63px; border-bottom: 1px solid #d9dcdf; padding-left: 25px; display: flex; align-items: baseline; line-height: 62px; flex: none; }
.title b { font-size: 24.8px; font-weight: 600; letter-spacing: -.4px; }
.title span { font-size: 20px; color: #7a8295; margin-left: 7px; letter-spacing: 0; }
.scrollarea { flex: 1; display: flex; justify-content: space-between; align-items: stretch; padding-left: 25px; }
.innerbar { width: 12px; border-radius: 6px 6px 0 0; background: #e9ebed; }
.grid { width: 1451px; height: 597px; margin-top: 25px; display: flex; flex-direction: column; background: #fff; box-shadow: 0 4px 9px rgba(50, 65, 90, .42), 0 0 18px rgba(0, 0, 0, .06); }
.row { display: grid; grid-template-columns: 62px repeat(8, 151.66px) 1fr; flex: 1; border-bottom: 1px solid #f1f1f1; }
.row > div { border-right: 1px solid #f3f3f3; }
.row > div:last-child { border-right: 0; }
.row:nth-child(even) { background: #f6f6f6; }
.head { height: 35px; flex: none; border: 0; position: relative; background: #fff; font-size: 16.8px; letter-spacing: -.12px; text-align: center; line-height: 38px; }
.body { height: 504px; display: flex; flex-direction: column; position: relative; box-shadow: inset 0 -28px 28px -28px rgba(0, 0, 0, .14); }
.filter { height: 56px; flex: none; background: linear-gradient(rgba(0, 0, 0, .1), rgba(0, 0, 0, .02) 16px, transparent 26px); }
.filter > div { padding: 6px 7px 0 6px; }
.in { display: flex; align-items: center; justify-content: flex-end; padding-right: 5px; height: 38px; background: #fff; border: 1px solid #e0e0e0; border-radius: 4px; }
.in.tall { height: 44px; }
.clear { width: 162px; height: 40px; border: 1px solid #e4514f; border-radius: 4px; background: #fff; color: #e4605e; display: flex; align-items: center; justify-content: center; gap: 1px; font-size: 14.500px; line-height: 18px; padding: 0 0 3px 2px; }
.clear svg { margin-top: 3px; }
.empty { position: absolute; left: 642px; top: 235px; width: 165px; height: 56px; line-height: 56px; text-align: center; background: rgba(255, 255, 255, .8); color: #808080; font-size: 17px; letter-spacing: -.05px; }
.pager { flex: 1; border-top: 2px solid #e4e4e5; display: flex; align-items: center; padding: 0 3px; font-size: 16.8px; letter-spacing: -.2px; white-space: nowrap; }
.nav { width: 413px; height: 48px; border: 0; border-radius: 4px; background: #f1f1f1; color: #b3b3b3; padding: 0; }
.pageno { display: flex; align-items: center; margin: -2px 0 0 71px; width: 199px; }
.num { width: 87px; height: 41px; border: 1px solid #e0e0e0; border-radius: 5px; margin: 0 5px; text-align: center; line-height: 43px; color: #111; padding-right: 19px; }
.size { margin: -1px 0 0 143px; width: 134px; height: 39px; border: 1px solid #e0e0e0; border-radius: 5px; display: flex; align-items: center; justify-content: space-between; padding: 0 5px 0 14px; color: #111; }
.pager .nav:last-child { margin-left: auto; }
.pagebar { width: 11px; background: #ebecee; flex: none; }
.pagebar div { height: 671px; background: #c1c6cf; border-radius: 6px; }
.status { position: absolute; left: 0; bottom: 0; width: 485px; height: 28px; background: #fae19a; border-top-right-radius: 4px; font-size: 14.5px; letter-spacing: -.05px; line-height: 28px; padding-left: 5px; color: #1e1d17; white-space: nowrap; }

.taskbar { height: 52px; border-top: 1px solid #bcb0c0; background: linear-gradient(90deg, #f5dedb 0, #f5dedd 140px, #f5dff6 240px, #f5dff7 490px, #f0d9ea 720px, #f0dbec 960px, #f4e2f7 1150px, #f5e5fa 1500px, #f6e4fb 100%); display: flex; align-items: center; color: #222; flex: none; }
.weather { margin-left: 25px; }
.temp { margin-left: 8px; width: 90px; font-size: 14.700px; line-height: 20px; letter-spacing: -.12px; padding-top: 6px; }
.temp span, .clock span { display: block; }
.temp span { color: #66605f; }
.start { margin: 8px 0 0 349px; }
.search { margin: 8px 0 0 17px; width: 273px; height: 38px; border-radius: 19px; background: #fbf5fb; box-shadow: 0 0 0 1px #e2cfe2, 0 1px 1px #b5a4b5; display: flex; align-items: center; padding: 0 19px 0 14px; font-size: 16.5px; color: #5b575c; }
.search span { flex: 1; padding-left: 12px; letter-spacing: -.2px; }
.apps { margin-left: 4px; display: flex; align-self: stretch; }
.apps > div { width: 55.1px; height: 51px; display: flex; align-items: center; justify-content: center; position: relative; padding-top: 8px; }
.apps .run::after { content: ""; position: absolute; bottom: 0; left: 23px; width: 9px; height: 2px; background: #857d88; border-radius: 2px 2px 0 0; }
.apps .cur { background: linear-gradient(90deg, transparent 3px, #faf3fb 3px, #faf3fb 52px, transparent 52px); }
.apps .cur::after { left: 18px; width: 20px; background: #0b6fd0; }
.tray { margin-left: auto; display: flex; align-items: center; padding: 8px 23px 0 0; }
.lang { margin-left: 27px; width: 30px; font-size: 14px; letter-spacing: -.1px; }
.wifi { margin-left: 21px; }
.vol { margin-left: 9px; }
.bat { margin-left: 10px; }
.clock { width: 90px; text-align: right; font-size: 14.5px; line-height: 20px; letter-spacing: -.1px; margin-top: -2px; }
.nbell { margin-left: 10px; }
.copilot { margin-left: 22px; }
.pre { font: 700 9px "Open Sans", sans-serif; fill: #222; }
```
